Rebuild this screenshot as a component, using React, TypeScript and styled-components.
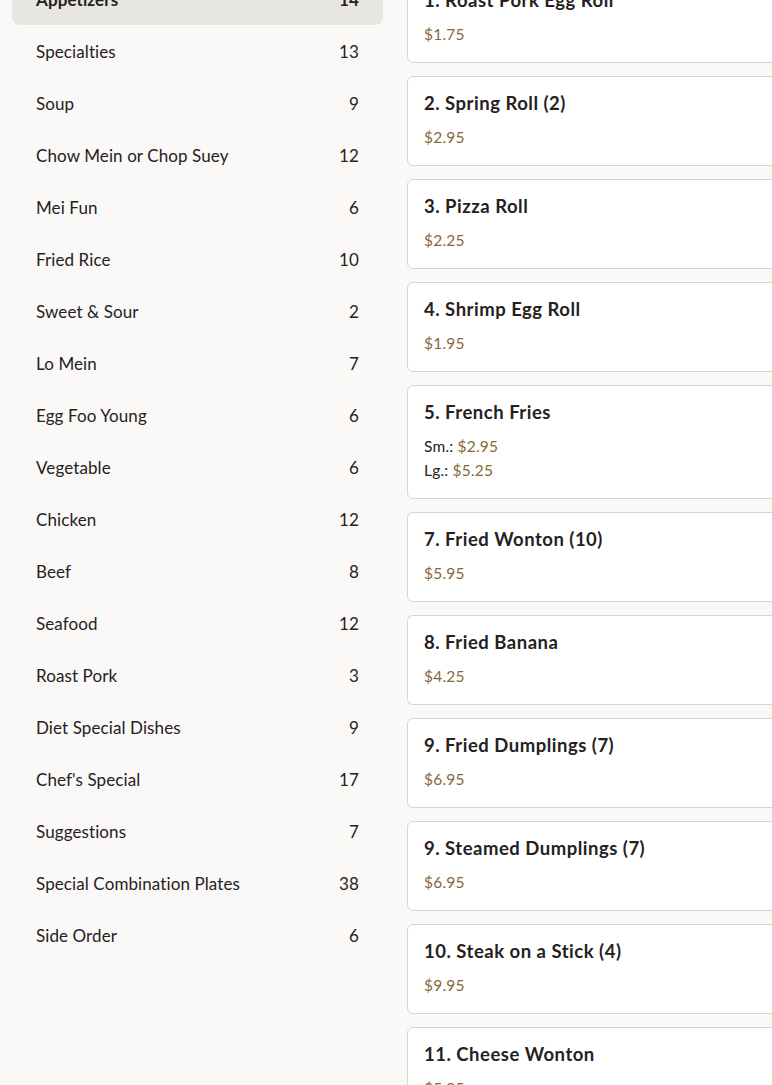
import styled, { createGlobalStyle } from "styled-components";

const GlobalStyle = createGlobalStyle`
  html, body {
    margin: 0;
    padding: 0;
    overflow: hidden;
    background: #faf9f7;
  }
  body {
    font-family: Lato, "Open Sans", sans-serif;
    color: #2a2522;
  }
`;

interface Category {
  name: string;
  count: number;
}

interface Price {
  label?: string;
  value: string;
}

interface Dish {
  title: string;
  prices: Price[];
}

const categories: Category[] = [
  { name: "Appetizers", count: 14 },
  { name: "Specialties", count: 13 },
  { name: "Soup", count: 9 },
  { name: "Chow Mein or Chop Suey", count: 12 },
  { name: "Mei Fun", count: 6 },
  { name: "Fried Rice", count: 10 },
  { name: "Sweet & Sour", count: 2 },
  { name: "Lo Mein", count: 7 },
  { name: "Egg Foo Young", count: 6 },
  { name: "Vegetable", count: 6 },
  { name: "Chicken", count: 12 },
  { name: "Beef", count: 8 },
  { name: "Seafood", count: 12 },
  { name: "Roast Pork", count: 3 },
  { name: "Diet Special Dishes", count: 9 },
  { name: "Chef's Special", count: 17 },
  { name: "Suggestions", count: 7 },
  { name: "Special Combination Plates", count: 38 },
  { name: "Side Order", count: 6 },
];

const dishes: Dish[] = [
  { title: "1. Roast Pork Egg Roll", prices: [{ value: "$1.75" }] },
  { title: "2. Spring Roll (2)", prices: [{ value: "$2.95" }] },
  { title: "3. Pizza Roll", prices: [{ value: "$2.25" }] },
  { title: "4. Shrimp Egg Roll", prices: [{ value: "$1.95" }] },
  {
    title: "5. French Fries",
    prices: [
      { label: "Sm.:", value: "$2.95" },
      { label: "Lg.:", value: "$5.25" },
    ],
  },
  { title: "7. Fried Wonton (10)", prices: [{ value: "$5.95" }] },
  { title: "8. Fried Banana", prices: [{ value: "$4.25" }] },
  { title: "9. Fried Dumplings (7)", prices: [{ value: "$6.95" }] },
  { title: "9. Steamed Dumplings (7)", prices: [{ value: "$6.95" }] },
  { title: "10. Steak on a Stick (4)", prices: [{ value: "$9.95" }] },
  { title: "11. Cheese Wonton", prices: [{ value: "$5.95" }] },
  { title: "12. Crab Rangoon (8)", prices: [{ value: "$6.25" }] },
];

const Page = styled.div`
  display: grid;
  grid-template-columns: 371px 420px;
  gap: 24px;
  padding: 0 12px;
  margin-top: -27px;
`;

const Sidebar = styled.nav`
  display: flex;
  flex-direction: column;
`;

const CategoryRow = styled.div<{ $active?: boolean }>`
  display: flex;
  align-items: center;
  justify-content: space-between;
  height: 52px;
  padding: 0 24px;
  border-radius: 8px;
  font-size: 17px;
  letter-spacing: 0.1px;
  font-weight: ${({ $active }) => ($active ? 700 : 400)};
  background: ${({ $active }) => ($active ? "#e8e6e2" : "transparent")};
  color: #26211e;
`;

const DishList = styled.div`
  display: flex;
  flex-direction: column;
  gap: 13px;
`;

const Card = styled.div`
  background: #ffffff;
  border: 1px solid #d8d5d1;
  border-radius: 6px;
  padding: 16px;
  display: flex;
  flex-direction: column;
`;

const DishTitle = styled.h3`
  margin: 0 0 11px;
  font-size: 18.5px;
  line-height: 21px;
  font-weight: 700;
  letter-spacing: 0.5px;
  color: #26211e;
`;

const PriceLine = styled.div`
  font-size: 15.5px;
  line-height: 24px;
  letter-spacing: 0.2px;
  color: #26211e;
`;

const Amount = styled.span`
  color: #88683a;
`;

const DishCard = ({ dish }: { dish: Dish }) => (
  <Card>
    <DishTitle>{dish.title}</DishTitle>
    {dish.prices.map((p, i) => (
      <PriceLine key={i}>
        {p.label && <>{p.label} </>}
        <Amount>{p.value}</Amount>
      </PriceLine>
    ))}
  </Card>
);

const App = () => {
  return (
    <>
      <GlobalStyle />
      <Page>
        <Sidebar>
          {categories.map((c, i) => (
            <CategoryRow key={c.name} $active={i === 0}>
              <span>{c.name}</span>
              <span>{c.count}</span>
            </CategoryRow>
          ))}
        </Sidebar>
        <DishList>
          {dishes.map((d) => (
            <DishCard key={d.title} dish={d} />
          ))}
        </DishList>
      </Page>
    </>
  );
};

export default App;
